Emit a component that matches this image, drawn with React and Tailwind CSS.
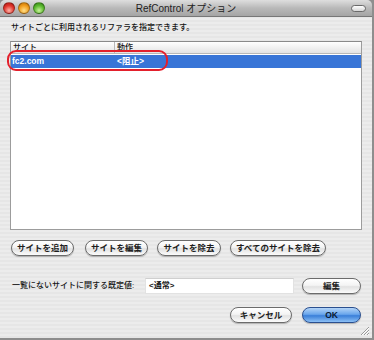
import React from "react";

// --- Helper Components ---
const Light = ({ color }) => (
  <div className={`w-[12px] h-[12px] rounded-full border border-black/30 ${color}`} />
);

const AquaButton = ({ label, width, primary = false }) => (
  <button
    type="button"
    className={`${width} h-[16px] rounded-full border text-[8.5px] font-bold leading-none flex items-center justify-center shadow-[0_1px_1px_rgba(0,0,0,0.25)] ${
      primary
        ? "border-[#2a4f8f] text-[#0b1a33] bg-[linear-gradient(#b3d4f7_0%,#6aa6ec_45%,#3a7fd9_55%,#8cc0f5_100%)]"
        : "border-[#6b6b6b] text-[#1d1d1d] bg-[linear-gradient(#ffffff_0%,#f4f4f4_45%,#e2e2e2_55%,#fbfbfb_100%)]"
    }`}
  >
    {label}
  </button>
);

const App = () => {
  return (
    <div
      className="w-[374px] h-[340px] bg-[#8e8e8e] text-[#141414]"
      style={{ fontFamily: '"Liberation Sans", "Noto Sans CJK JP", sans-serif' }}
    >
      <div className="w-[372px] h-[338px] flex flex-col rounded-t-[5px] overflow-hidden relative">
        {/* title bar */}
        <div className="h-[17px] shrink-0 flex items-center px-[3px] border-b border-[#777] bg-[linear-gradient(#dedede,#b9b9b9_50%,#a5a5a5)]">
          <div className="flex gap-[3px]">
            <Light color="bg-[radial-gradient(circle_at_50%_75%,#ffb3a8,#e0342b_55%,#a8150f)]" />
            <Light color="bg-[radial-gradient(circle_at_50%_75%,#ffe08a,#f19d1c_55%,#b86a05)]" />
            <Light color="bg-[radial-gradient(circle_at_50%_75%,#c8f29a,#5ab82e_55%,#2f7d12)]" />
          </div>
          <div className="flex-1 text-center text-[10px] text-[#222] pr-[24px]">RefControl オプション</div>
          <div className="w-[15px] h-[7px] rounded-full border border-[#6a6a6a] bg-[linear-gradient(#ffffff,#d5d5d5)] mr-[3px]" />
        </div>

        {/* body */}
        <div className="flex-1 flex flex-col px-[10px] bg-[repeating-linear-gradient(0deg,#e6e6e6_0px,#e6e6e6_2px,#ececec_2px,#ececec_4px)]">
          <div className="mt-[5px] h-[12px] leading-[12px] text-[8px] font-medium pl-[1px]">
            サイトごとに利用されるリファラを指定できます。
          </div>

          {/* site table */}
          <div className="mt-[7px] h-[189px] border border-[#9c9c9c] border-t-[#8a8a8a] bg-white relative">
            <div className="h-[12px] flex border-b border-[#b8b8b8] bg-[linear-gradient(#ffffff,#f1f1f1_50%,#e3e3e3)] text-[8px] font-medium leading-[11px]">
              <div className="w-[104px] pl-[2px] border-r border-[#b8b8b8]">サイト</div>
              <div className="pl-[2px]">動作</div>
            </div>
            <div className="h-[13px] mt-[1px] flex bg-[#3875d7] text-white font-bold text-[8.5px] leading-[13px]">
              <div className="w-[105px] pl-[1px]">fc2.com</div>
              <div className="pl-[1px]">&lt;阻止&gt;</div>
            </div>
            <div className="absolute left-[-4px] top-[8px] w-[161px] h-[21px] rounded-[9px] border-2 border-[#e3202c]" />
          </div>

          {/* site buttons */}
          <div className="mt-[10px] ml-[1px] flex">
            <AquaButton label="サイトを追加" width="w-[63px]" />
            <div className="ml-[11px]">
              <AquaButton label="サイトを編集" width="w-[63px]" />
            </div>
            <div className="ml-[9px]">
              <AquaButton label="サイトを除去" width="w-[64px]" />
            </div>
            <div className="ml-[9px]">
              <AquaButton label="すべてのサイトを除去" width="w-[96px]" />
            </div>
          </div>

          {/* default value */}
          <div className="mt-[22px] flex items-center">
            <div className="w-[135px] pl-[2px] text-[8px] font-medium">一覧にないサイトに関する既定値:</div>
            <div className="w-[149px] h-[16px] bg-white border border-[#e2e2e2] border-t-[#cfcfcf] text-[8px] font-bold leading-[14px] pl-[3px]">
              &lt;通常&gt;
            </div>
            <div className="ml-[8px]">
              <AquaButton label="編集" width="w-[59px]" />
            </div>
          </div>

          {/* dialog buttons */}
          <div className="mt-[13px] mr-[1px] flex justify-end">
            <AquaButton label="キャンセル" width="w-[62px]" />
            <div className="ml-[10px]">
              <AquaButton label="OK" width="w-[59px]" primary />
            </div>
          </div>
        </div>

        {/* resize grip */}
        <svg className="absolute right-[2px] bottom-[2px]" width="10" height="10" viewBox="0 0 10 10">
          <path d="M1 9 L9 1 M4 9 L9 4 M7 9 L9 7" stroke="#9a9a9a" strokeWidth="1" />
          <path d="M2 9 L9 2 M5 9 L9 5 M8 9 L9 8" stroke="#ffffff" strokeWidth="1" />
        </svg>
      </div>
    </div>
  );
};

export default App;
